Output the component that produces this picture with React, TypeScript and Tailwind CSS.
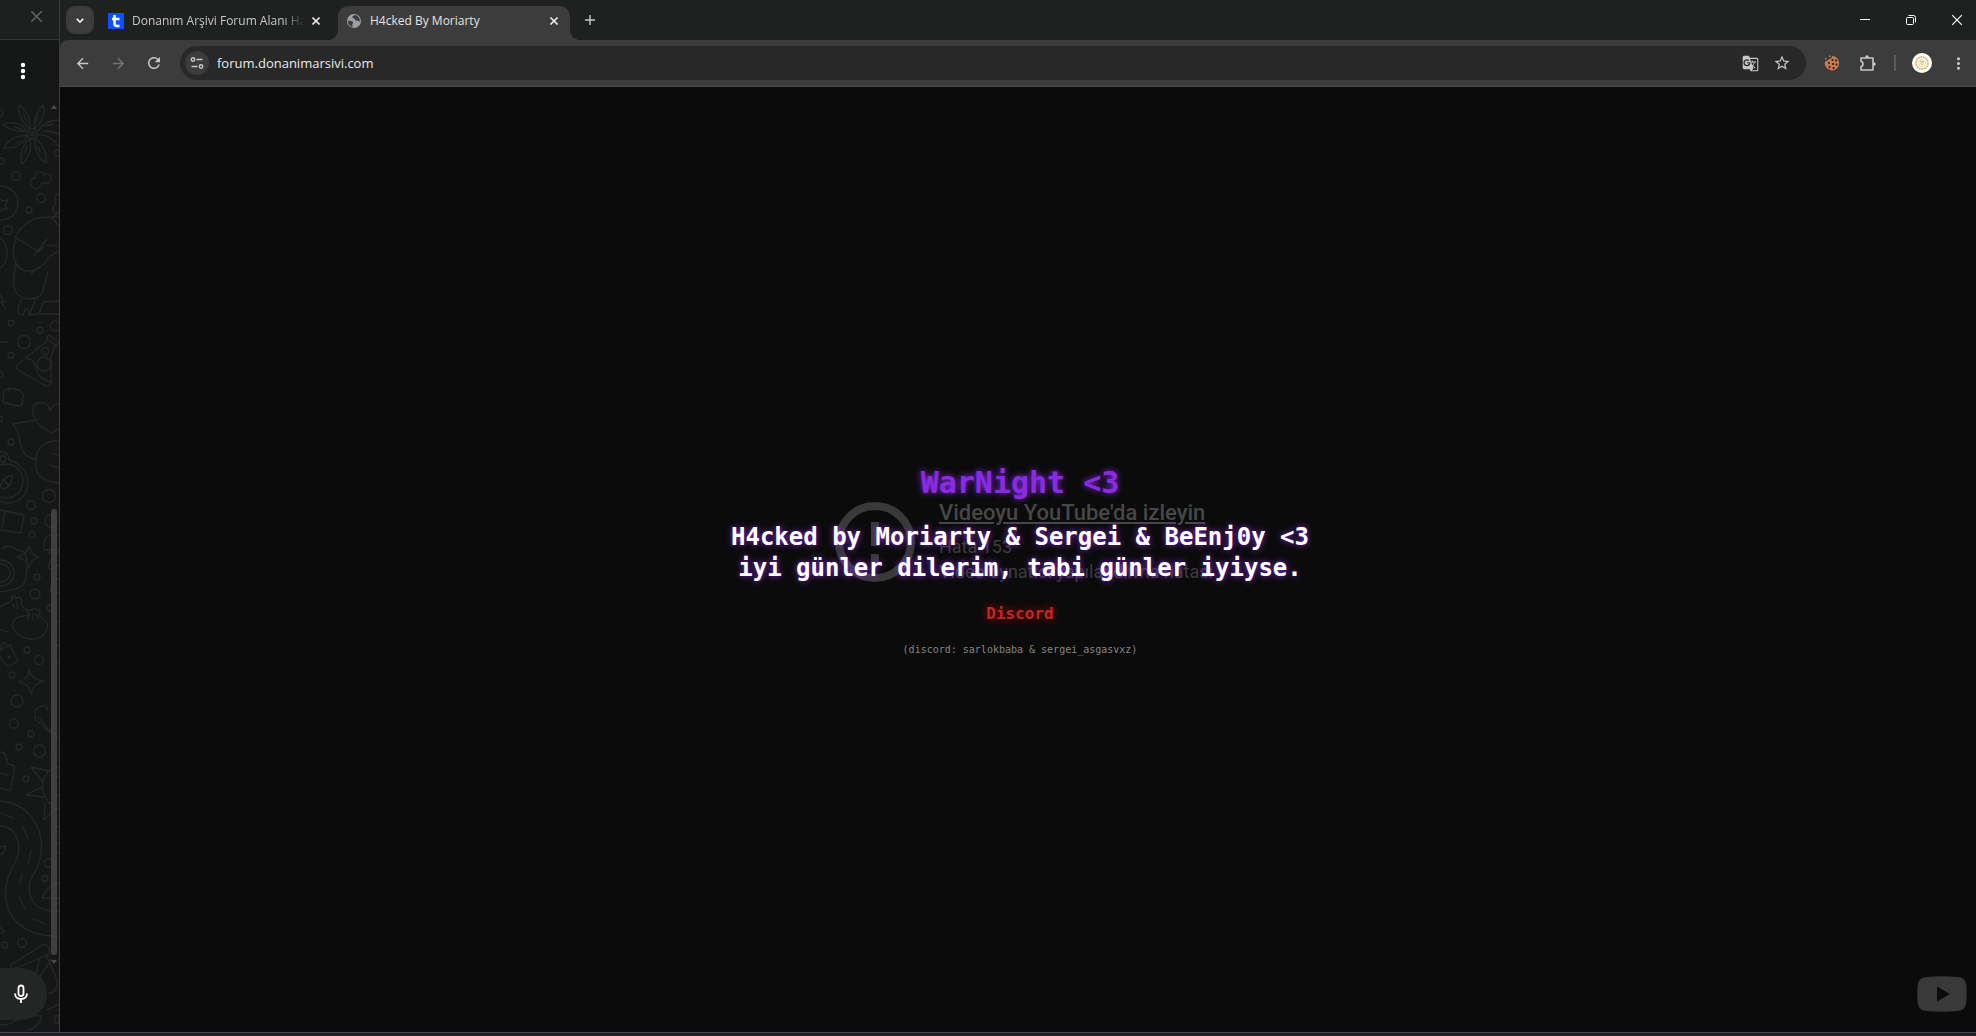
import { clsx } from "clsx";
import {
    MdArrowBack,
    MdArrowForward,
    MdGTranslate,
    MdMoreVert,
    MdOutlineMicNone,
    MdRefresh,
    MdStarOutline,
} from "react-icons/md";

interface TabProps {
    title: string;
    icon: React.ReactNode;
    active?: boolean;
}

function CloseIcon({ size }: { size: number }) {
    return (
        <svg width={size} height={size} viewBox="0 0 10 10" fill="none" stroke="currentColor">
            <path d="M1 1l8 8M9 1l-8 8" />
        </svg>
    );
}

// wallpaper behind the chat list
function Doodles() {
    const dots = [
        [-1, 113, 4], [1, 161, 3], [16, 176, 4.5], [41, 198, 4.5], [29, 210, 3], [8, 230, 4.5],
        [11, 323, 2.8], [40, 330, 3], [24, 342, 6.5], [55, 326, 5], [11, 355.5, 3], [57, 153, 3],
        [45, 351, 3.5], [44, 364, 7], [0, 375, 3], [0, 419, 2.5], [11, 442, 3], [49, 496, 6.5], [31, 505, 4.5],
        [34, 521, 3], [51, 521, 6], [32, 535, 3], [37, 577, 3], [35, 594, 5], [50, 608, 3],
        [27, 650, 3], [39, 660, 4.5], [12, 675, 3], [17, 701, 6], [14, 723.5, 4.5], [31, 734, 3],
        [19, 747, 3], [39.5, 751, 6], [26, 779, 3], [58, 829, 3], [49, 863, 4.5], [45, 878.5, 3],
        [22, 943, 4.5], [4.5, 945, 3], [59, 848, 5],
    ];
    return (
        <svg
            className="absolute inset-0"
            width="59"
            height="928"
            viewBox="0 104 59 928"
            fill="none"
            stroke="#272929"
            strokeWidth="1.3"
            strokeLinejoin="round"
            strokeLinecap="round"
        >
            {dots.map(([x, y, r]) => <circle key={`${x}-${y}`} cx={x} cy={y} r={r} />)}

            {/* flower */}
            <circle cx="32" cy="134" r="5" />
            <circle cx="32" cy="134" r="2" />
            <path d="M30 129C20 121 18 112 19 105C27 110 31 119 30 129ZM34 129C34 118 37 110 43 105C46 114 42 123 34 129ZM27 131C17 132 8 129 3 124C13 121 23 124 27 131ZM28 136C22 146 13 149 4 148C9 139 18 134 28 136ZM30 139C32 151 28 159 22 164C19 154 23 144 30 139ZM35 138C44 145 47 154 46 163C38 158 34 148 35 138ZM37 135C46 134 54 139 59 147M37 132C42 124 50 120 59 120M44 131C51 131 56 133 59 134" />
            <path d="M24 115l3 7M38 115l-2 7M14 127l8 2M15 144l7-3M25 153l2-7M40 152l-2-6M45 126l8-2" />

            {/* popcorn, badge, star */}
            <path d="M33 187C29 185 30 178 35 178C35 170 43 170 44 175C50 172 53 177 50 182C47 185 44 182 42 183C42 188 36 190 33 187Z" />
            <path d="M59 193C54 195 54 201 56 204C51 207 52 213 59 215" />
            <circle cx="1" cy="203" r="17" />
            <path d="M-1 197l3 4l6-1l-3 5l3 4l-6 0l-3 4M0 238C10 244 9 262 0 268M0 294l4 8h-3l4 6M0 342h7" />

            {/* figure */}
            <path d="M15 237C26 217 40 216 59 217M15 237L39 252C43 244 50 244 59 247M34 256l13-17M16 239C8 258 19 276 35 270C48 265 46 255 59 252M16 265C10 288 15 298 29 299C39 299 42 294 43 291L48 272M52 218l7 8M31 274l8-7" />
            <path d="M22 298l-4 9v6l5 2l2-5c4-3 4 1 4 5l10-1l4-12l16-1M35 300l-5 14M38 314h21M52 218l7-7" />

            {/* flask */}
            <path d="M46 338l3-3l10 7l-3 4zM47 341L17 365c-2 3 1 5 3 6l24 14c4 3 7 0 7-3V356l4-10M28 359c9 1 6 9 11 16s11 5 12 8" />

            {/* purse, heart, leaf */}
            <path d="M4 391l5-3l10 2l3 3c2 0 1 3 1 5l-1 6c0 2-2 2-4 2l-13-3c-2 0-3-2-2-4zM9 391v-3" />
            <path d="M51 433C30 422 29 405 38 403C44 401 50 406 50 411C52 406 56 403 59 404M51 433l8-4M36 420l-23 4l5 8C21 448 22 458 36 459M36 463C34 448 47 440 59 441M36 463C35 477 44 481 59 483M53 454l6 1M50 465l9 3" />

            {/* compass, box */}
            <circle cx="3" cy="459" r="3" />
            <circle cx="6" cy="481" r="17" />
            <path d="M0 452c6-1 9 3 9 8C31 466 34 492 17 501c-6 3-12 2-17 0M0 487c1-7 5-10 12-12c0 8-3 13-9 14zM3 479l6 7M0 510l24 5l-3 18L0 530M5 511l-3 17" />

            {/* camera, sparkle, bow */}
            <circle cx="1" cy="573" r="13" />
            <circle cx="1" cy="573" r="9" />
            <path d="M2 549c3-4 10-4 13 0l7 2c7 4 5 18 4 28c-4 11-15 11-26 13M29 546c1 7 4 10 10 11c-6 2-8 4-10 11c-2-7-5-9-12-11c8-2 9-4 12-11z" />
            <path d="M59 536c-10-3-15 1-15 8v6h15M48 554c3-6 5 2 8 0l3-3M59 566c-3-4-5 5-8 3c-7-2 1-5-1-8M54 579h5M53 580l-3 11l9 2M59 621l-5 3l2 5M59 645c-8 2-5 15 0 18" />

            {/* dumplings, lock */}
            <path d="M0 607c4-4 10-3 13-8l-2-2l4-1l1 3l3-2l3 3c-3 5 2 8 5 10M13 603l1 5M17 602v7M30 615c-2-2-4-4-2-5l4 0l2-2l3 2l3 0c1 3-3 5-1 6c18 9 4 25-9 23c-14-2-24-14-12-22c5-2 8 0 10-2zM29 614l-1 6M33 614v6M36 614l2 5M0 629l8 3" />
            <path d="M0 650l10-5l8 16l-9 5c-4 0-7-6-9-10M1 650c-1-5 2-9 5-6l2 3" />
            <circle cx="9" cy="657" r="1" />
            <path d="M29 670c2 7 6 10 15 11c-7 2-10 4-13 12M29 670c-1 8-4 9-10 12c8 2 10 4 12 12" />

            {/* bone, sun, bag */}
            <path d="M48 710c-1-7-13-5-13 5c0 9 6 6 9 12s12 5 15 12M53 700v24M38 717c5 4 7 8 10 12l9 5" />
            <path d="M59 767C38 769 36 800 59 809M31 767l18 4M31 767l11 14M42 787l-16 8l18 2M45 803l-1 17l12-12M54 761l3-10M59 776c-8 2-8 15 0 20" />
            <path d="M0 752c5 0 7 4 7 12l6 1c2 0 1 3 1 6l-3 17c0 2-2 3-4 2l-7-2M0 773l8 2" />

            {/* road */}
            <path d="M0 801C34 803 51 839 36 870C21 892 32 913 59 911M0 826C16 826 24 845 15 863C-8 900 12 938 59 936" />
            <path d="M1 813l12 5M22 826l6 12M31 851l-3 13M22 874l-2 9M19 897l6 12M33 919l13 5M0 847l6-1c-1 5-3 8-6 9M0 927l4 5l-3 1" />
            <path d="M42 898c4-9 10-14 17-15M42 898h17M54 907l5-5" />

            {/* cup */}
            <path d="M11 965l33-21l4 2l2 8l-36 15c-2 0-3-2-3-4zM16 967l13 26M46 954L57 980c2 8-3 13-8 13M39 959l-4 24l17-24M47 1010l12-6M55 1016l4-1v8h-4zM0 1024c9 4 16-6 22-6c8-3 13-2 20-2c-2 8-6 12-14 14" />
        </svg>
    );
}

function Sidebar() {
    return (
        <aside className="flex w-[60px] shrink-0 flex-col border-r border-[#3a3b3b] bg-[#161817]">
            <div className="flex h-10 shrink-0 items-start justify-end border-b border-[#343635] bg-[#1d201f] pr-4 pt-[10px] text-[#686a69]">
                <button aria-label="Close chat">
                    <CloseIcon size={13} />
                </button>
            </div>
            <div className="flex h-16 shrink-0 items-center pb-[2px] pl-4">
                <button aria-label="Menu" className="text-white">
                    <svg width="14" height="18" viewBox="0 0 14 18" fill="currentColor">
                        <circle cx="7" cy="3" r="2.2" />
                        <circle cx="7" cy="9" r="2.2" />
                        <circle cx="7" cy="15" r="2.2" />
                    </svg>
                </button>
            </div>
            <div className="relative flex flex-1 flex-col justify-end overflow-hidden pb-3">
                <Doodles />
                <svg className="absolute right-[2px] top-0" width="6" height="6" viewBox="0 0 6 6">
                    <path d="M3 1L6 5H0Z" fill="#4a4c4b" />
                </svg>
                <div className="absolute bottom-[77px] right-[2px] top-[405px] w-[6px] rounded-full bg-[#4b4d4c]/75" />
                <svg className="absolute bottom-[67px] right-[2px]" width="6" height="6" viewBox="0 0 6 6">
                    <path d="M3 5L6 1H0Z" fill="#4a4c4b" />
                </svg>
                <button
                    aria-label="Voice message"
                    className="relative flex h-[52px] w-[47px] items-center justify-end rounded-r-full bg-[#242625] pr-4 text-white"
                >
                    <svg width="20" height="20" viewBox="0 0 20 20" fill="none" stroke="currentColor" strokeWidth="1.8">
                        <rect x="7.500" y="1.500" width="5" height="10.500" rx="2.500" />
                        <path d="M4 9.500q.3 5.500 6 5.500t6-5.500M10 15v4" />
                    </svg>
                </button>
            </div>
        </aside>
    );
}

function Tab({ title, icon, active }: TabProps) {
    return (
        <div
            className={clsx(
                "relative flex h-[34px] items-center pb-1 font-['Open_Sans','Noto_Sans',sans-serif] text-xs",
                active ? "w-[232px] rounded-t-[10px] bg-[#3c3c3c] pl-2 pr-2 text-[#e3e3e3]" : "w-[238px] pl-2 pr-[14px] text-[#c7c7c7]"
            )}
        >
            {active && (
                <>
                    <span className="absolute -left-[10px] bottom-0 size-[10px] bg-[radial-gradient(circle_at_0_0,transparent_10px,#3c3c3c_10px)]" />
                    <span className="absolute -right-[10px] bottom-0 size-[10px] bg-[radial-gradient(circle_at_100%_0,transparent_10px,#3c3c3c_10px)]" />
                </>
            )}
            {icon}
            <span
                className={clsx(
                    "ml-2 min-w-0 flex-1 overflow-hidden whitespace-nowrap",
                    !active && "[mask-image:linear-gradient(to_right,black_88%,transparent)]"
                )}
            >
                {title}
            </span>
            <button aria-label="Close tab" className="ml-1 flex size-4 items-center justify-center">
                <svg width="8" height="8" viewBox="0 0 8 8" stroke="#e3e3e3" strokeWidth="1.6">
                    <path d="M.5.5l7 7M7.5.5l-7 7" />
                </svg>
            </button>
        </div>
    );
}

function TabStrip() {
    return (
        <div className="flex h-10 shrink-0 items-end bg-[#1f2120]">
            <button
                aria-label="Search tabs"
                className="mx-[6px] mb-[6px] flex size-7 items-center justify-center rounded-[9px] bg-[#3c3c3c]"
            >
                <svg width="8" height="5" viewBox="0 0 10 6" fill="none" stroke="#f0f0f0" strokeWidth="2">
                    <path d="M1 1l4 4l4-4" />
                </svg>
            </button>
            <Tab
                title="Donanım Arşivi Forum Alanı Hacklendi"
                icon={
                    <span className="flex size-4 shrink-0 items-center justify-center bg-[#0c50ff]">
                        <svg width="10" height="14" viewBox="0 0 10 14" fill="none" stroke="#fff" strokeWidth="2.6">
                            <path d="M3.5 1v8.500q0 2.500 2.500 2.500h2.500M1 5h7.500" />
                        </svg>
                    </span>
                }
            />
            <Tab
                active
                title="H4cked By Moriarty"
                icon={
                    <svg className="shrink-0" width="16" height="16" viewBox="0 0 16 16">
                        <circle cx="8" cy="8" r="7" fill="#9aa0a6" />
                        <path
                            d="M2.200 7.500C4 8 6 7.500 7 9c.8 1.300-1 1.500-.7 3c.2 1 .5 1.600.2 2C3.500 13.500 1.800 10.500 2.200 7.500ZM9 2c-1 1-3 .8-2.700 2.300C6.600 5.500 8.500 5 9 6.500c.4 1.300 1.800 1 2.800 1.300s1.500 1.200 2 .7C14.200 5.500 12 2.500 9 2Z"
                            fill="#3c3c3c"
                        />
                    </svg>
                }
            />
            <button aria-label="New tab" className="mb-[6px] ml-[6px] flex size-7 items-center justify-center">
                <svg width="10" height="10" viewBox="0 0 10 10" stroke="#c7c7c7" strokeWidth="1.400">
                    <path d="M5 0v10M0 5h10" />
                </svg>
            </button>
            <div className="-mr-1 ml-auto flex h-10 text-white">
                <button aria-label="Minimize" className="flex w-[46px] items-center justify-center">
                    <svg width="10" height="10" viewBox="0 0 10 10" stroke="currentColor">
                        <path d="M0 4.500h10" />
                    </svg>
                </button>
                <button aria-label="Restore" className="flex w-[46px] items-center justify-center">
                    <svg width="10" height="10" viewBox="0 0 10 10" fill="none" stroke="currentColor">
                        <rect x=".5" y="2.500" width="7" height="7" rx="1" />
                        <path d="M2.500 .5h5q2 0 2 2v5" />
                    </svg>
                </button>
                <button aria-label="Close" className="flex w-[46px] items-center justify-center">
                    <CloseIcon size={12} />
                </button>
            </div>
        </div>
    );
}

function Toolbar() {
    const navButton = "flex h-8 w-9 items-center justify-center";
    return (
        <div className="flex h-[47px] shrink-0 items-center rounded-tl-[8px] border-b border-[#4c4c4c] bg-[#3c3c3c] pl-1 text-[#c7c7c7]">
            <button aria-label="Back" className={navButton}><MdArrowBack size={17} /></button>
            <button aria-label="Forward" className={clsx(navButton, "text-[#757575]")}><MdArrowForward size={17} /></button>
            <button aria-label="Reload" className={navButton}><MdRefresh size={18} /></button>
            <div className="mx-2 flex h-[34px] flex-1 items-center rounded-full bg-[#282828] pl-[5px] pr-4">
                <button aria-label="Site information" className="flex size-6 shrink-0 items-center justify-center rounded-full bg-[#3c3c3c]">
                    <svg width="14" height="12" viewBox="0 0 14 12" fill="none" stroke="#c7c7c7" strokeWidth="1.400">
                        <circle cx="3" cy="2.500" r="1.700" />
                        <path d="M6.500 2.500h6M1.500 9.500h6" />
                        <circle cx="11" cy="9.500" r="1.700" />
                    </svg>
                </button>
                <input
                    aria-label="Address"
                    defaultValue="forum.donanimarsivi.com"
                    className="ml-2 h-6 min-w-0 flex-1 bg-transparent font-['Open_Sans','Noto_Sans',sans-serif] text-[13px] text-[#e8e8e8] outline-none"
                />
                <button aria-label="Translate" className="flex w-8 justify-center"><MdGTranslate size={17} /></button>
                <button aria-label="Bookmark" className="-mr-2 flex w-8 justify-center"><MdStarOutline size={18} /></button>
            </div>
            <button aria-label="Cookie editor" className={navButton}>
                <svg width="16" height="16" viewBox="0 0 16 16">
                    <path d="M8 1q0 3-3 3Q4 6 1 6.500A7.200 7.200 0 1 0 8 1Z" fill="#c9794e" />
                    <path d="M5 .5h1.500V2H5zM1 3h1.500v1.500H1z" fill="#c9794e" />
                    <g fill="#20150f">
                        <circle cx="8.500" cy="5" r="1" />
                        <circle cx="12" cy="5.500" r="1" />
                        <circle cx="5" cy="8" r="1" />
                        <circle cx="9" cy="9" r="1.100" />
                        <circle cx="12.500" cy="9.500" r="1" />
                        <circle cx="5.500" cy="12" r="1" />
                        <circle cx="9.500" cy="13" r="1" />
                    </g>
                </svg>
            </button>
            <button aria-label="Extensions" className={navButton}>
                <svg width="18" height="18" viewBox="0 0 18 18" fill="none" stroke="currentColor" strokeWidth="1.600" strokeLinejoin="round">
                    <path d="M2 4h12v12H2v-3.500q2-.3 2-2.500T2 7.500z" />
                    <path d="M6.500 3.500Q6.500 1.500 8 1.500t1.500 2zM14.500 8.500q2 0 2 1.500t-2 1.500z" fill="currentColor" strokeWidth=".6" />
                </svg>
            </button>
            <span className="mx-2 h-4 w-[2px] bg-[#5c5c5c]" />
            <button aria-label="Profile" className="ml-2 flex size-5 items-center justify-center rounded-full bg-white">
                <svg width="16" height="16" viewBox="0 0 16 16" fill="none" stroke="#d5bd72">
                    <circle cx="8" cy="8" r="6" strokeWidth="1.800" strokeDasharray="2 .6" />
                    <circle cx="8" cy="8" r="3.500" stroke="#e3d3a0" />
                    <path d="M6 6.500h4M6 8h4M7 9.500h2" />
                </svg>
            </button>
            <button aria-label="Chrome menu" className="ml-2 flex h-8 w-9 items-center justify-center"><MdMoreVert size={19} /></button>
        </div>
    );
}

function VideoError() {
    return (
        <div className="flex items-center gap-6 font-[Roboto,sans-serif] text-[#3d3d3d]">
            <svg width="80" height="80" viewBox="0 0 80 80" fill="none" stroke="#393939" strokeWidth="8">
                <circle cx="40" cy="40" r="36" />
                <path d="M40 20v24M40 52v8" />
            </svg>
            <div className="whitespace-nowrap text-lg leading-[25px]">
                <a href="#video" className="mb-2 block text-[22px] font-medium leading-[26px] text-[#474747] underline">
                    Videoyu YouTube'da izleyin
                </a>
                <p>Hata 153</p>
                <p>Video oynatıcı yapılandırma hatası</p>
            </div>
        </div>
    );
}

function DefacedPage() {
    return (
        <main className="relative grid flex-1 place-items-center bg-[#0b0b0b] *:[grid-area:1/1]">
            <div className="pb-9 pl-3">
                <VideoError />
            </div>
            <div className="relative pl-1 pt-[2px] text-center font-['DejaVu_Sans_Mono',monospace] font-bold">
                <h1 className="text-[30px] leading-[38px] text-[#8a2be2] [text-shadow:0_0_6px_#8a2be2]">WarNight &lt;3</h1>
                <h2 className="mt-5 text-2xl leading-[31px] text-white [text-shadow:0_0_6px_#8a2be2]">
                    H4cked by Moriarty &amp; Sergei &amp; BeEnj0y &lt;3
                    <br />
                    iyi günler dilerim, tabi günler iyiyse.
                </h2>
                <p className="mt-5 text-base leading-5">
                    <a href="#discord" className="text-[#b92b2b] [text-shadow:0_0_8px_#c00000]">Discord</a>
                </p>
                <p className="mt-[18px] text-[10px] font-normal leading-4 text-[#858585]">
                    (discord: sarlokbaba &amp; sergei_asgasvxz)
                </p>
            </div>
            <a href="#youtube" aria-label="YouTube" className="absolute bottom-5 right-[9px]">
                <svg width="50" height="36" viewBox="0 0 50 36">
                    <path d="M10 1Q25-.5 40 1Q48 1 49 8Q50.500 18 49 28Q48 35 40 35Q25 36.500 10 35Q2 35 1 28Q-.5 18 1 8Q2 1 10 1Z" fill="#393939" />
                    <path d="M20 10.500L33 18L20 25.500Z" fill="#0b0b0b" />
                </svg>
            </a>
        </main>
    );
}

export default function App() {
    return (
        <div className="flex h-screen flex-col overflow-hidden bg-[#1f2120]">
            <div className="flex min-h-0 flex-1">
                <Sidebar />
                <div className="flex min-w-0 flex-1 flex-col">
                    <TabStrip />
                    <Toolbar />
                    <DefacedPage />
                </div>
            </div>
            <div className="h-1 shrink-0 border-t border-[#48484a] bg-[#211f26]" />
        </div>
    );
}
